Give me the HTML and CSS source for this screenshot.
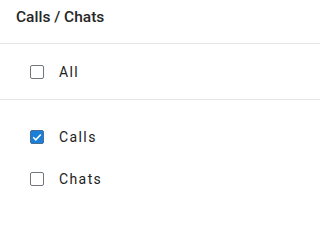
FILE: index.html
```html
<!DOCTYPE html>
<html>
<head>
<meta charset="utf-8">
<link rel="stylesheet" href="styles.css">
</head>
<body>
<div class="panel">
  <div class="header">Calls / Chats</div>
  <div class="section">
    <label class="row">
      <span class="box"></span>
      <span class="label">All</span>
    </label>
  </div>
  <div class="list">
    <label class="row">
      <span class="box checked">
        <svg width="14" height="14" viewBox="0 0 14 14"><path d="M3.2 7.2 L5.8 9.8 L10.8 4.4" fill="none" stroke="#fff" stroke-width="1.5"/></svg>
      </span>
      <span class="label">Calls</span>
    </label>
    <label class="row">
      <span class="box"></span>
      <span class="label">Chats</span>
    </label>
  </div>
</div>
</body>
</html>
```
FILE: styles.css
```css
html, body {
  margin: 0;
  padding: 0;
  background: #fff;
}
.panel {
  width: 100%;
  font-family: Roboto, "Liberation Sans", sans-serif;
  color: #212121;
}
.header {
  font-size: 15.5px;
  font-weight: 500;
  line-height: 24px;
  padding: 5px 16px 14px;
  border-bottom: 1px solid #e6e6e6;
  color: #262626;
}
.section {
  height: 55px;
  display: flex;
  align-items: center;
  border-bottom: 1px solid #e6e6e6;
}
.list {
  padding-top: 16px;
}
.list .row {
  height: 42px;
}
.row {
  display: flex;
  align-items: center;
  padding-left: 30px;
  gap: 15px;
}
.box {
  box-sizing: border-box;
  width: 14px;
  height: 14px;
  border: 1.5px solid #70767c;
  border-radius: 2px;
  background: #fff;
  display: flex;
  align-items: center;
  justify-content: center;
}
.box.checked {
  background: #1a7fd8;
  border-color: #4a6f92;
}
.box svg {
  display: block;
  flex: none;
}
.label {
  font-size: 14px;
  letter-spacing: 1.4px;
  color: #222;
}
```
